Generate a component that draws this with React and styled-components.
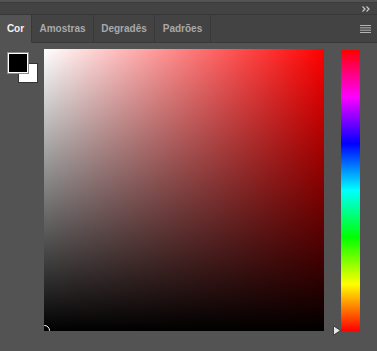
import React from "react";
import styled, { createGlobalStyle } from "styled-components";

const Global = createGlobalStyle`
  html, body { margin: 0; padding: 0; background: #535353; }
  * { box-sizing: border-box; }
`;

const Panel = styled.div`
  width: 377px;
  height: 351px;
  background: #535353;
  display: flex;
  flex-direction: column;
  font-family: "Liberation Sans", Arial, sans-serif;
  overflow: hidden;
`;

const TopStrip = styled.div`
  height: 3px;
  background: #535353;
  border-bottom: 1px solid #3c3c3c;
`;

const CollapseBar = styled.div`
  height: 12px;
  background: #434343;
  border-bottom: 1px solid #383838;
  display: flex;
  align-items: center;
  justify-content: flex-end;
  padding-right: 7px;
`;

const TabBar = styled.div`
  height: 28px;
  background: #434343;
  display: flex;
  align-items: stretch;
`;

const Tab = styled.div`
  display: flex;
  align-items: center;
  justify-content: center;
  width: ${(p) => p.$w}px;
  font-size: 10px;
  font-weight: bold;
  color: ${(p) => (p.$active ? "#f2f2f2" : "#a9a9a9")};
  background: ${(p) => (p.$active ? "#535353" : "#434343")};
  border-right: 1px solid #383838;
  border-bottom: ${(p) => (p.$active ? "1px solid #535353" : "1px solid #383838")};
`;

const TabFill = styled.div`
  flex: 1;
  display: flex;
  align-items: center;
  justify-content: flex-end;
  padding-right: 6px;
  border-bottom: 1px solid #383838;
`;

const Body = styled.div`
  flex: 1;
  display: flex;
  align-items: flex-start;
  padding-top: 6px;
`;

const SwatchArea = styled.div`
  position: relative;
  width: 44px;
  height: 40px;
  flex: none;
`;

const BackSwatch = styled.div`
  position: absolute;
  left: 18px;
  top: 14px;
  width: 20px;
  height: 20px;
  background: #ffffff;
  border: 1px solid #333;
`;

const FrontSwatch = styled.div`
  position: absolute;
  left: 7px;
  top: 3px;
  width: 22px;
  height: 22px;
  border: 1px solid #8c8c8c;
  background: #ffffff;
  padding: 1px;
`;

const FrontInner = styled.div`
  width: 100%;
  height: 100%;
  background: #000;
`;

const Field = styled.div`
  position: relative;
  width: 280px;
  height: 282px;
  flex: none;
  overflow: hidden;
  background: linear-gradient(to top, #000, rgba(0, 0, 0, 0)),
    linear-gradient(to right, #fff, #f00);
`;

const FieldCursor = styled.div`
  position: absolute;
  left: -5px;
  bottom: -5px;
  width: 11px;
  height: 11px;
  border-radius: 50%;
  border: 1px solid #fff;
  box-shadow: 0 0 0 1px #000, inset 0 0 0 1px #000;
`;

const SliderArea = styled.div`
  position: relative;
  margin-left: 17px;
  padding-top: 1px;
  flex: none;
`;

const HueBar = styled.div`
  width: 19px;
  height: 281px;
  background: linear-gradient(
    to bottom,
    #f00 0%,
    #f0f 16.66%,
    #00f 33.33%,
    #0ff 50%,
    #0f0 66.66%,
    #ff0 83.33%,
    #f00 100%
  );
`;

const HueArrow = styled.svg`
  position: absolute;
  left: -9px;
  bottom: -5px;
`;

export default function App() {
  return (
    <Panel>
      <Global />
      <TopStrip />
      <CollapseBar>
        <svg width="8" height="6" viewBox="0 0 8 6">
          <path d="M0.5 0.5 L3 3 L0.5 5.5 M4.5 0.5 L7 3 L4.5 5.5" stroke="#c8c8c8" strokeWidth="1.2" fill="none" />
        </svg>
      </CollapseBar>
      <TabBar>
        <Tab $active $w={32}>Cor</Tab>
        <Tab $w={62}>Amostras</Tab>
        <Tab $w={61}>Degradês</Tab>
        <Tab $w={56}>Padrões</Tab>
        <TabFill>
          <svg width="11" height="8" viewBox="0 0 11 8">
            <rect x="0" y="0" width="11" height="1" fill="#b4b4b4" />
            <rect x="0" y="2.33" width="11" height="1" fill="#b4b4b4" />
            <rect x="0" y="4.66" width="11" height="1" fill="#b4b4b4" />
            <rect x="0" y="7" width="11" height="1" fill="#b4b4b4" />
          </svg>
        </TabFill>
      </TabBar>
      <Body>
        <SwatchArea>
          <BackSwatch />
          <FrontSwatch>
            <FrontInner />
          </FrontSwatch>
        </SwatchArea>
        <Field>
          <FieldCursor />
        </Field>
        <SliderArea>
          <HueBar />
          <HueArrow width="9" height="11" viewBox="0 0 9 11">
            <path d="M1.5 1.5 Q1 0.8 2 1.2 L7.8 5 Q8.5 5.5 7.8 6 L2 9.8 Q1 10.2 1.5 9.5 Z" fill="#e6e6e6" stroke="#2a2a2a" strokeWidth="0.8" />
          </HueArrow>
        </SliderArea>
      </Body>
    </Panel>
  );
}
